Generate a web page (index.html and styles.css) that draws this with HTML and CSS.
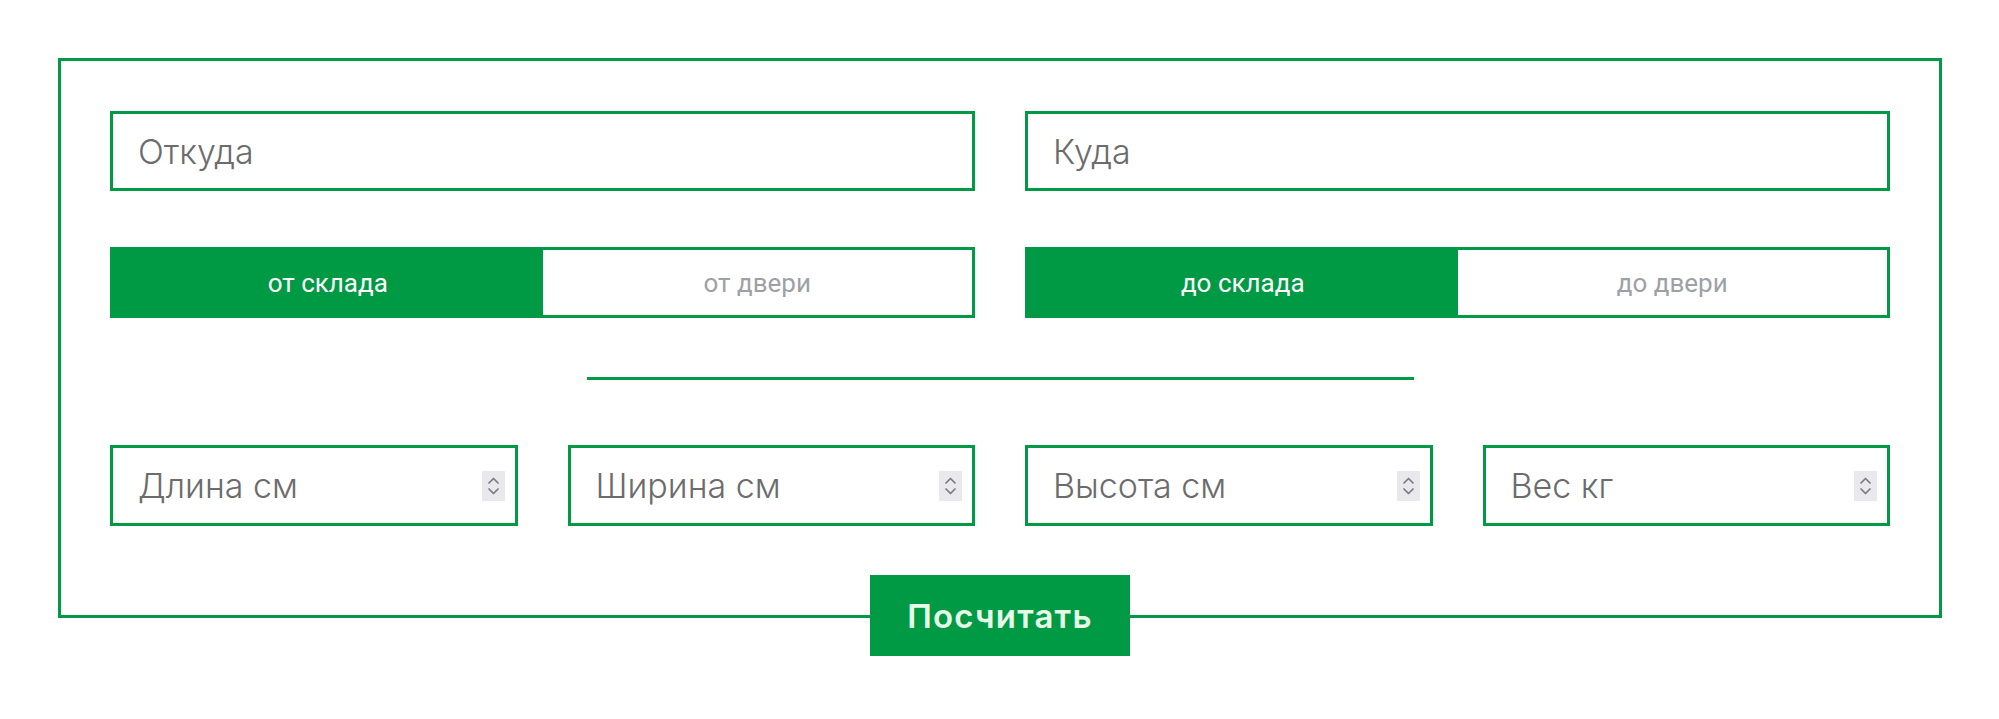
FILE: index.html
```html
<!DOCTYPE html>
<html lang="ru">
<head>
<meta charset="utf-8">
<title>Калькулятор</title>
<link rel="stylesheet" href="styles.css">
</head>
<body>
<form class="calc">
  <div class="row two">
    <input class="field" type="text" placeholder="Откуда">
    <input class="field" type="text" placeholder="Куда">
  </div>
  <div class="row two toggles">
    <div class="toggle">
      <span class="opt active">от склада</span>
      <span class="opt">от двери</span>
    </div>
    <div class="toggle">
      <span class="opt active">до склада</span>
      <span class="opt">до двери</span>
    </div>
  </div>
  <div class="divider"></div>
  <div class="row four">
    <label class="num"><input type="text" placeholder="Длина см"><span class="spin"><svg width="23" height="30" viewBox="0 0 23 30"><path d="M7 12 L11.5 7.5 L16 12 M7 18 L11.5 22.5 L16 18" fill="none" stroke="#7a7a80" stroke-width="1.7" stroke-linecap="round" stroke-linejoin="round"/></svg></span></label>
    <label class="num"><input type="text" placeholder="Ширина см"><span class="spin"><svg width="23" height="30" viewBox="0 0 23 30"><path d="M7 12 L11.5 7.5 L16 12 M7 18 L11.5 22.5 L16 18" fill="none" stroke="#7a7a80" stroke-width="1.7" stroke-linecap="round" stroke-linejoin="round"/></svg></span></label>
    <label class="num"><input type="text" placeholder="Высота см"><span class="spin"><svg width="23" height="30" viewBox="0 0 23 30"><path d="M7 12 L11.5 7.5 L16 12 M7 18 L11.5 22.5 L16 18" fill="none" stroke="#7a7a80" stroke-width="1.7" stroke-linecap="round" stroke-linejoin="round"/></svg></span></label>
    <label class="num"><input type="text" placeholder="Вес кг"><span class="spin"><svg width="23" height="30" viewBox="0 0 23 30"><path d="M7 12 L11.5 7.5 L16 12 M7 18 L11.5 22.5 L16 18" fill="none" stroke="#7a7a80" stroke-width="1.7" stroke-linecap="round" stroke-linejoin="round"/></svg></span></label>
  </div>
  <button class="submit" type="button">Посчитать</button>
</form>
</body>
</html>
```
FILE: styles.css
```css
* { box-sizing: border-box; }
html, body { margin: 0; padding: 0; background: #fff; }
body { height: 719px; padding-top: 58px; font-family: Inter, "Noto Sans", sans-serif; }

.calc {
  position: relative;
  width: 1884px;
  height: 560px;
  margin: 0 0 0 58px;
  border: 3px solid #009a44;
  padding: 50px 49px 0 49px;
}

.row { display: grid; column-gap: 50px; }
.two { grid-template-columns: repeat(2, minmax(0, 1fr)); }
.four { grid-template-columns: repeat(4, minmax(0, 1fr)); margin-top: 65px; }
.toggles { margin-top: 56px; }

.field {
  display: block;
  width: 100%;
  min-width: 0;
  height: 80px;
  border: 3px solid #009a44;
  border-radius: 0;
  padding: 0 20px 0 25px;
  font-family: Inter, "Noto Sans", sans-serif;
  font-size: 34px;
  font-weight: 300;
  color: #555;
  outline: none;
  background: #fff;
}
.field::placeholder, .num input::placeholder { color: #6c6c6c; opacity: 1; }

.toggle {
  display: flex;
  height: 71px;
  border: 3px solid #009a44;
}
.opt {
  flex: 1;
  display: flex;
  align-items: center;
  justify-content: center;
  font-family: Roboto, "Liberation Sans", sans-serif;
  font-size: 26px;
  color: #9da1a6;
  background: #fff;
}
.opt.active { background: #009a44; color: #fff; }

.divider {
  width: 827px;
  height: 3px;
  margin: 59px auto 0;
  background: #009a44;
}

.num {
  display: flex;
  align-items: center;
  min-width: 0;
  height: 81px;
  border: 3px solid #009a44;
  padding: 0 10px 0 25px;
}
.num input {
  flex: 1;
  width: 0;
  min-width: 0;
  border: none;
  outline: none;
  padding: 0;
  font-family: Inter, "Noto Sans", sans-serif;
  font-size: 34px;
  font-weight: 300;
  color: #555;
  background: transparent;
}
.spin {
  display: block;
  flex: none;
  width: 23px;
  height: 30px;
  background: #e9e9ed;
}
.spin svg { display: block; }

.submit {
  position: absolute;
  left: 50%;
  bottom: -41px;
  transform: translateX(-50%);
  width: 260px;
  height: 81px;
  border: none;
  border-radius: 0;
  background: #009a44;
  color: #e6fbe8;
  font-family: Inter, "Noto Sans", sans-serif;
  font-weight: 600;
  font-size: 33px;
  letter-spacing: 1.2px;
  cursor: pointer;
}
```
